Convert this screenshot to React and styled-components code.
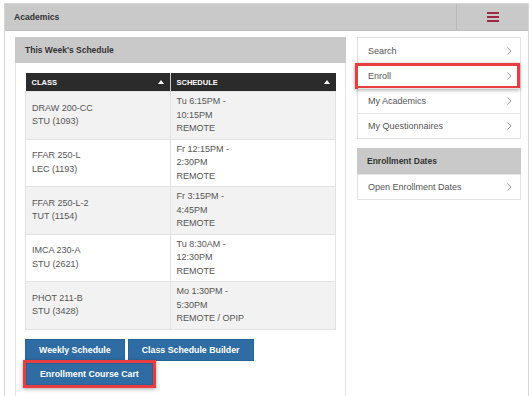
import React from "react";
import styled, { createGlobalStyle } from "styled-components";

const GlobalStyle = createGlobalStyle`
  body {
    margin: 0;
    background: #fff;
    font-family: "Liberation Sans", Arial, sans-serif;
    color: #555;
  }
`;

const Page = styled.div`
  padding: 3px 3px 0 4px;
  width: 525px;
`;

const Frame = styled.div`
  border: 1px solid #d6d6d6;
  border-bottom: none;
  height: 392px;
  overflow: hidden;
`;

const TopBar = styled.div`
  display: flex;
  height: 26px;
  background: #c9c9c9;
  border-bottom: 1px solid #bcbcbc;
`;

const TopTitle = styled.div`
  flex: 1;
  display: flex;
  align-items: center;
  padding-left: 9px;
  font-size: 8.6px;
  font-weight: bold;
  color: #333;
`;

const MenuCell = styled.div`
  width: 71px;
  border-left: 1px solid #b9b9b9;
  display: flex;
  align-items: center;
  justify-content: center;
`;

const Body = styled.div`
  display: flex;
  gap: 11px;
  padding: 6px 7px 0 10px;
`;

const Panel = styled.div`
  border: 1px solid #e2e2e2;
  border-top: none;
  width: ${(p) => p.$width}px;
  box-sizing: border-box;
`;

const PanelHeader = styled.div`
  height: 26px;
  display: flex;
  align-items: center;
  background: #c9c9c9;
  padding-left: 10px;
  font-size: 8.5px;
  font-weight: bold;
  color: #333;
  margin: 0 -1px;
`;

const PanelBody = styled.div`
  padding: 10px 9px 30px 9px;
`;

const Table = styled.table`
  width: 311px;
  border-collapse: collapse;
  font-size: 9px;
`;

const Th = styled.th`
  background: #2b2b2b;
  color: #fff;
  height: 18px;
  padding: 0 6px;
  text-align: left;
  font-size: 7.5px;
  font-weight: bold;
  width: ${(p) => p.$width}px;
  border-left: ${(p) => (p.$divided ? "1px solid #d0d0d0" : "none")};
`;

const ThInner = styled.div`
  display: flex;
  align-items: center;
  justify-content: space-between;
`;

const SortUp = styled.span`
  width: 0;
  height: 0;
  border-left: 3px solid transparent;
  border-right: 3px solid transparent;
  border-bottom: 4px solid #fff;
`;

const Tr = styled.tr`
  background: ${(p) => (p.$shade ? "#f2f2f2" : "#fff")};
`;

const Td = styled.td`
  border: 1px solid #e2e2e2;
  padding: 3px 6px;
  line-height: 13.5px;
  vertical-align: middle;
  color: #555;
`;

const ButtonRow = styled.div`
  display: flex;
  gap: 3px;
  margin-top: ${(p) => p.$top}px;
`;

const Button = styled.button`
  height: 22px;
  padding: 0 13px;
  background: #2e6ca3;
  border: 1px solid #2a6396;
  color: #fff;
  font-family: "Liberation Sans", Arial, sans-serif;
  font-size: 8.8px;
  font-weight: bold;
  cursor: pointer;
`;

const Highlight = styled.div`
  display: inline-flex;
  border: 3px solid #ea3d3f;
  margin-left: -2px;
  box-shadow: 0 1px 4px rgba(0, 0, 0, 0.35);
`;

const Side = styled.div`
  width: 164px;
  display: flex;
  flex-direction: column;
  gap: 9px;
`;

const NavList = styled.div`
  border: 1px solid #e2e2e2;
  background: #fff;
`;

const NavItem = styled.div`
  position: relative;
  height: 25px;
  display: flex;
  align-items: center;
  justify-content: space-between;
  padding: 0 8px 0 10px;
  font-size: 9px;
  color: #555;
  border-top: ${(p) => (p.$first ? "none" : "1px solid #e6e6e6")};
  box-sizing: border-box;

  ${(p) =>
    p.$marked &&
    `
    &::after {
      content: "";
      position: absolute;
      top: -1px;
      left: -3px;
      right: 0px;
      bottom: -1px;
      border: 3px solid #ea3d3f;
      box-shadow: 0 1px 4px rgba(0, 0, 0, 0.35);
    }
  `}
`;

const SideBox = styled.div`
  border: 1px solid #e2e2e2;
  border-top: none;
`;

const Chevron = () => (
  <svg width="5" height="8" viewBox="0 0 5 8">
    <polyline points="0.5,0.5 4,4 0.5,7.5" fill="none" stroke="#999" strokeWidth="1" />
  </svg>
);

const Hamburger = () => (
  <svg width="12" height="10" viewBox="0 0 12 10">
    <rect x="0" y="0" width="12" height="2" fill="#9c2a3e" />
    <rect x="0" y="4" width="12" height="2" fill="#9c2a3e" />
    <rect x="0" y="8" width="12" height="2" fill="#9c2a3e" />
  </svg>
);

const rows = [
  { cls: ["DRAW 200-CC", "STU (1093)"], sched: ["Tu 6:15PM -", "10:15PM", "REMOTE"] },
  { cls: ["FFAR 250-L", "LEC (1193)"], sched: ["Fr 12:15PM -", "2:30PM", "REMOTE"] },
  { cls: ["FFAR 250-L-2", "TUT (1154)"], sched: ["Fr 3:15PM -", "4:45PM", "REMOTE"] },
  { cls: ["IMCA 230-A", "STU (2621)"], sched: ["Tu 8:30AM -", "12:30PM", "REMOTE"] },
  { cls: ["PHOT 211-B", "STU (3428)"], sched: ["Mo 1:30PM -", "5:30PM", "REMOTE / OPIP"] },
];

const navItems = ["Search", "Enroll", "My Academics", "My Questionnaires"];

const Lines = ({ items }) =>
  items.map((t, i) => (
    <React.Fragment key={i}>
      {t}
      {i < items.length - 1 && <br />}
    </React.Fragment>
  ));

export default function App() {
  return (
    <Page>
      <GlobalStyle />
      <Frame>
        <TopBar>
          <TopTitle>Academics</TopTitle>
          <MenuCell>
            <Hamburger />
          </MenuCell>
        </TopBar>
        <Body>
          <Panel $width={331}>
            <PanelHeader>This Week's Schedule</PanelHeader>
            <PanelBody>
              <Table>
                <thead>
                  <tr>
                    <Th $width={133}>
                      <ThInner>
                        CLASS <SortUp />
                      </ThInner>
                    </Th>
                    <Th $width={154} $divided>
                      <ThInner>
                        SCHEDULE <SortUp />
                      </ThInner>
                    </Th>
                  </tr>
                </thead>
                <tbody>
                  {rows.map((r, i) => (
                    <Tr key={i} $shade={i % 2 === 0}>
                      <Td>
                        <Lines items={r.cls} />
                      </Td>
                      <Td>
                        <Lines items={r.sched} />
                      </Td>
                    </Tr>
                  ))}
                </tbody>
              </Table>
              <ButtonRow $top={9}>
                <Button>Weekly Schedule</Button>
                <Button>Class Schedule Builder</Button>
              </ButtonRow>
              <ButtonRow $top={-1}>
                <Highlight>
                  <Button>Enrollment Course Cart</Button>
                </Highlight>
              </ButtonRow>
            </PanelBody>
          </Panel>
          <Side>
            <NavList>
              {navItems.map((n, i) => (
                <NavItem key={n} $first={i === 0} $marked={n === "Enroll"}>
                  {n}
                  <Chevron />
                </NavItem>
              ))}
            </NavList>
            <SideBox>
              <PanelHeader>Enrollment Dates</PanelHeader>
              <NavItem>
                Open Enrollment Dates
                <Chevron />
              </NavItem>
            </SideBox>
          </Side>
        </Body>
      </Frame>
    </Page>
  );
}
